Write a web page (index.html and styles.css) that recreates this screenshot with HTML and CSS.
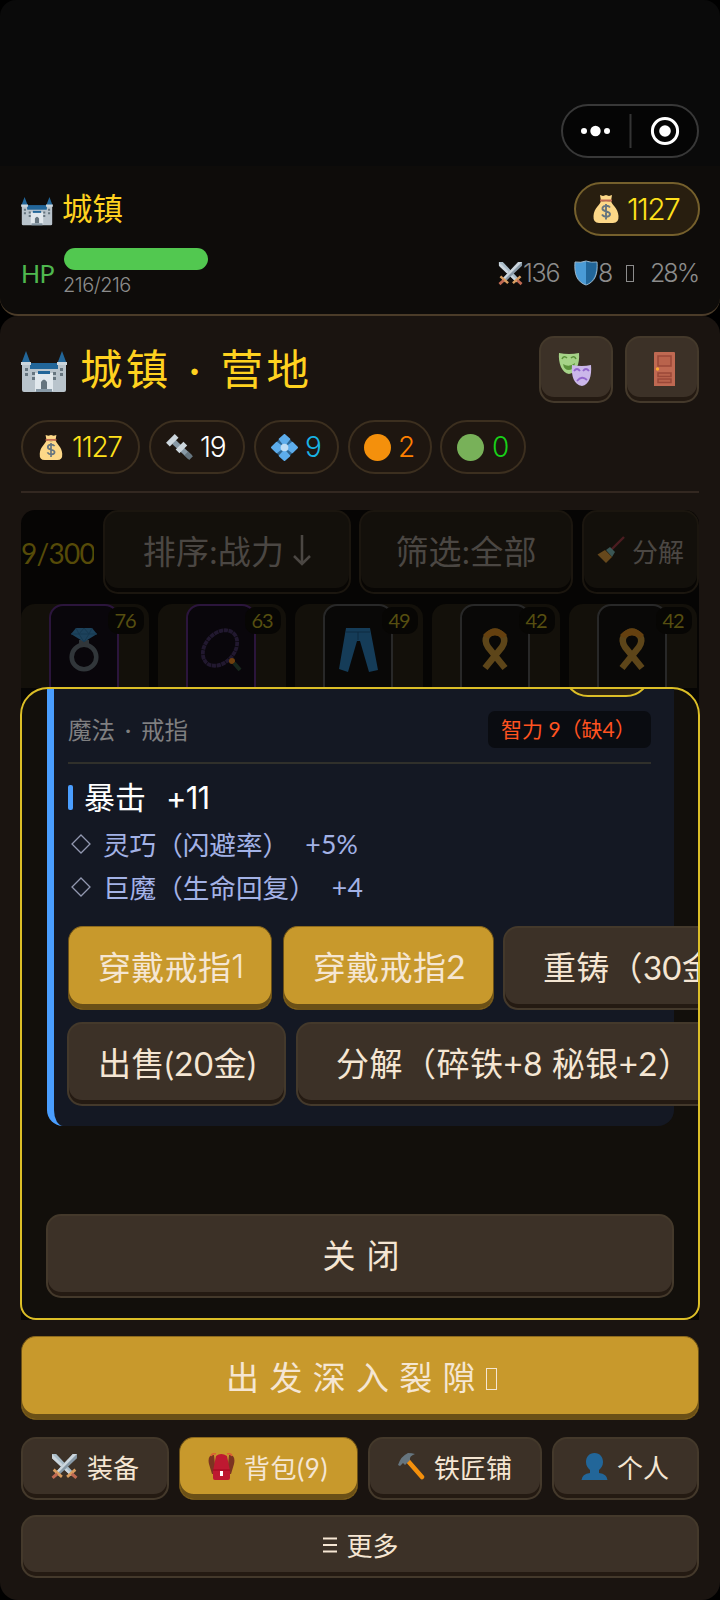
FILE: index.html
```html
<!DOCTYPE html>
<html lang="zh-CN">
<head>
<meta charset="utf-8">
<title>城镇 · 营地</title>
<link rel="stylesheet" href="styles.css">
</head>
<body>
<svg class="sprite" aria-hidden="true">
  <symbol id="castle" viewBox="0 0 46 42">
    <path d="M5 0L9.500 12H.5zM41 0l4.500 12h-9z" fill="#226699"/>
    <path d="M8 12h30v8H8z" fill="#226699"/>
    <path d="M1 13h8v5h28v-5h8v26q0 2-2 2H3q-2 0-2-2z" fill="#b9c4cc"/>
    <path d="M9 12h28v6H9z" fill="#226699"/>
    <path d="M0 11h10v3H0zM36 11h10v3H36z" fill="#ccd6dd"/>
    <path d="M14 22h4v-2h10v2h4v18H14z" fill="#e1e8ed"/>
    <path d="M17 20h12v3H17z" fill="#226699"/>
    <path d="M4 17h3v3H4zM4 22h3v3H4zM39 17h3v3h-3zM39 22h3v3h-3zM11 21h3v3h-3zM11 26h3v3h-3zM32 21h3v3h-3zM32 26h3v3h-3zM20 38v-7q3-5 6 0v7z" fill="#66757f"/>
    <path d="M15 38h16v3H15z" fill="#8899a6"/>
  </symbol>
  <symbol id="bag" viewBox="0 0 26 30">
    <path d="M8 7q5 2 10 0c1 4 7 7 7.500 15Q26 29 20 29H6Q0 29 .5 22C1 14 7 11 8 7z" fill="#fdd888"/>
    <path d="M7 1l3 1 3-1 3 1 3-1-1 6q-5 2-10 0z" fill="#fdd888"/>
    <path d="M7 5.500h12v2H7z" fill="#bf6952"/>
    <path d="M17 13.500c-2-3-8-2-7.500 1.500.5 3 7.500 2 7.500 5s-6 4-8 .5M13 10v15.500" fill="none" stroke="#67757f" stroke-width="1.900"/>
  </symbol>
  <symbol id="swords" viewBox="0 0 26 26">
    <path d="M1 1h4l17 18-3 3L1 5z" fill="#a9bcc8"/><path d="M1 1l20 20-2 1L1 5z" fill="#ccd6dd"/>
    <path d="M25 1h-4L4 19l3 3L25 5z" fill="#8899a6"/><path d="M25 1L5 21l-1-2L21 1z" fill="#ccd6dd"/>
    <path d="M2.500 16l8 7M23.500 16l-8 7" stroke="#d99e60" stroke-width="2.600"/>
    <path d="M6 20l-4.500 4M20 20l4.500 4" stroke="#bf6952" stroke-width="3"/>
  </symbol>
  <symbol id="shield" viewBox="0 0 24 26">
    <path d="M12 1q5 2 11 1c1 12-2 20-11 23C3 22 0 14 1 2q6 1 11-1z" fill="#4a9bd6" stroke="#9fb9cb"/>
    <path d="M12 1.500Q17 3.500 22.500 2.500C23 14 20 21.500 12 24.500z" fill="#226699"/>
  </symbol>
  <symbol id="masks" viewBox="0 0 34 34">
    <path d="M1 1q10 2 20 0c1 11-3 20-10 21C4 21 0 11 1 1z" fill="#a6d388"/>
    <path d="M4 7q2-4 5-1M13 6q3-3 5 1" fill="none" stroke="#5c913b" stroke-width="1.600"/><path d="M5 12q6 4 12-1-1 7-6 7-5 0-6-6z" fill="#5c913b"/>
    <path d="M14 13q10 2 19 0c1 11-2 20-9 21-8-1-11-10-10-21z" fill="#cbb7ea"/>
    <path d="M16 19q3-4 6 0M25 19q3-4 6 0M19 29q5-6 10-1" fill="none" stroke="#9266cc" stroke-width="1.800"/>
  </symbol>
  <symbol id="door" viewBox="0 0 21 34">
    <path d="M0 1q0-1 1-1h19q1 0 1 1v33H0z" fill="#bf6952"/>
    <path d="M4 4h13v10H4zM4 21h13v3.500H4zM4 27h13v3.500H4z" fill="#b9634c" stroke="#9a4838" stroke-width="1.500"/><circle cx="3.500" cy="17" r="1.700" fill="#ffac33"/>
  </symbol>
  <symbol id="bolt" viewBox="0 0 28 28">
    <path d="M8 8l17 16" stroke="#8899a6" stroke-width="5.500"/><path d="M2 11L11 2" stroke="#ccd6dd" stroke-width="5.500"/>
    <path d="M12 18l8-8" stroke="#ccd6dd" stroke-width="5.500"/><path d="M21 20l5 5" stroke="#66757f" stroke-width="5.500"/>
  </symbol>
  <symbol id="gem" viewBox="0 0 28 28">
    <path d="M7 7l14 14M21 7L7 21" stroke="#2a6797" stroke-width="2.500"/>
    <path d="M14 1l5 4.500-5 6-5-6zM14 17l5 5.500-5 4.500-5-4.500zM1 14l5-5 6 5-6 5zM27 14l-5-5-6 5 6 5z" fill="#5dadec" stroke="#5dadec" stroke-width="2" stroke-linejoin="round"/>
    <circle cx="14" cy="14" r="4" fill="#bddcf4"/>
  </symbol>
  <symbol id="brush" viewBox="0 0 28 28">
    <path d="M14 14L27 1" stroke="#4b1c21" stroke-width="2.400"/><path d="M9 14l4-3 5 5-3 5z" fill="#3a5654"/><path d="M8 14l7 7-6 6-8.500-8.500z" fill="#66481c"/>
  </symbol>
  <symbol id="ring" viewBox="0 0 30 44">
    <circle cx="15" cy="29" r="12.300" fill="none" stroke="#31363a" stroke-width="4.600"/><path d="M10 12h10v6H10z" fill="#31363a"/>
    <path d="M7 0h16l5 6-13 8L2 6z" fill="#1d425c"/><path d="M7 0l3 6 5-6 5 6 3-6M2 6h26M10 6l5 8 5-8" fill="none" stroke="#173950"/>
  </symbol>
  <symbol id="beads" viewBox="0 0 42 42">
    <ellipse cx="20" cy="19" rx="20" ry="14.500" transform="rotate(-48 20 19)" fill="none" stroke="#21182f" stroke-width="3.800" stroke-dasharray="4.300 .6"/>
    <circle cx="32" cy="32" r="3" fill="#70400e"/><path d="M34 34l6 7" stroke="#17271d" stroke-width="4"/>
  </symbol>
  <symbol id="jeans" viewBox="0 0 42 44">
    <path d="M9 0h24l8 42-9 2-9-31-3 0-9 31-9-3z" fill="#153c58"/><path d="M9 4h24M21 4v8" stroke="#0f2b40"/>
  </symbol>
  <symbol id="ribbon" viewBox="0 0 28 44">
    <path d="M4 40L21 19q4-6 1-11Q14-1 6 8q-3 5 1 11l17 21" fill="none" stroke="#5d4519" stroke-width="6.500"/>
    <path d="M2 7Q14-6 26 7l-4 3q-8-5-16 0z" fill="#65400f"/>
  </symbol>
  <symbol id="pack" viewBox="0 0 27 27">
    <path d="M6 2Q-1 2 1 11l3 10h4zM21 2q7 0 5 9l-3 10h-4z" fill="#7c3421"/><path d="M3 3q1-3 5-2M24 3q-1-3-5-2" fill="none" stroke="#dd5f35" stroke-width="1.600"/>
    <path d="M8 3q5-4 11 0l3 15v7q0 2-2 2H7q-2 0-2-2v-7z" fill="#be1931"/><path d="M5 17h17" stroke="#a0041e"/><path d="M12 18h3v5h-3z" fill="#fff"/>
  </symbol>
  <symbol id="hammer" viewBox="0 0 27 27">
    <path d="M10 8l14 16" stroke="#f4900c" stroke-width="4.500" stroke-linecap="round"/>
    <path d="M0 12q3-9 10-12 4 0 7 1-6 2-5 6l-5 5-2-2-3 3z" fill="#66757f"/>
  </symbol>
  <symbol id="person" viewBox="0 0 27 27">
    <path d="M13.500 0C19 0 22 4 22 9c0 4-2 6-4 8v3q8 1 8.500 7H.5Q1 21 9 20v-3c-2-2-4-4-4-8 0-5 3-9 8.500-9z" fill="#226699"/>
  </symbol>
</svg>

<div class="app">
  <div class="statusbar">
    <div class="capsule">
      <svg width="138" height="54" viewBox="0 0 138 54">
        <circle cx="21" cy="26" r="3" fill="#fff"/><circle cx="32.500" cy="26" r="5.200" fill="#fff"/><circle cx="44" cy="26" r="3" fill="#fff"/>
        <path d="M67.500 9v34" stroke="#343434" stroke-width="2"/>
        <circle cx="102" cy="26" r="12.600" fill="none" stroke="#fff" stroke-width="3"/><circle cx="102" cy="26" r="5.800" fill="#fff"/>
      </svg>
    </div>
  </div>

  <header class="hud">
    <div class="hud-top">
      <div class="place"><svg class="i-castle"><use href="#castle"/></svg><span>城镇</span></div>
      <div class="gold num"><svg class="i-bag"><use href="#bag"/></svg><span>1127</span></div>
    </div>
    <div class="hud-bottom">
      <span class="hp-label">HP</span>
      <div class="hp"><div class="hp-bar"></div><span class="hp-text num">216/216</span></div>
      <div class="stats num">
        <svg class="i-stat"><use href="#swords"/></svg><span class="atk">136</span>
        <svg class="i-shield"><use href="#shield"/></svg><span class="def">8</span>
        <i class="tofu"></i><span class="crit">28%</span>
      </div>
    </div>
  </header>

  <main class="camp">
    <div class="title-row">
      <svg class="i-title"><use href="#castle"/></svg>
      <h1>城镇<span class="dot">·</span>营地</h1>
      <div class="btn square"><svg class="i-masks"><use href="#masks"/></svg></div>
      <div class="btn square"><svg class="i-door"><use href="#door"/></svg></div>
    </div>
    <div class="chips num">
      <div class="chip c1"><svg class="i-bag"><use href="#bag"/></svg><span>1127</span></div>
      <div class="chip c2"><svg><use href="#bolt"/></svg><span>19</span></div>
      <div class="chip c3"><svg><use href="#gem"/></svg><span>9</span></div>
      <div class="chip c4"><i class="ball"></i><span>2</span></div>
      <div class="chip c5"><i class="ball"></i><span>0</span></div>
    </div>

    <section class="bag">
      <div class="toolbar">
        <div class="count">9/300</div>
        <div class="btn dim sort">排序:战力<svg width="18" height="32" viewBox="0 0 18 32"><path d="M9 1v29M1 22l8 8 8-8" fill="none" stroke="#4b4743" stroke-width="2.500"/></svg></div>
        <div class="btn dim filter">筛选:全部</div>
        <div class="btn dim split"><svg><use href="#brush"/></svg>分解</div>
      </div>
      <div class="cells">
        <div class="cell"><div class="tile epic"><svg><use href="#ring"/></svg></div><b>76</b></div>
        <div class="cell"><div class="tile epic"><svg><use href="#beads"/></svg></div><b>63</b></div>
        <div class="cell"><div class="tile"><svg><use href="#jeans"/></svg></div><b>49</b></div>
        <div class="cell"><div class="tile"><svg><use href="#ribbon"/></svg></div><b>42</b></div>
        <div class="cell"><div class="tile"><svg><use href="#ribbon"/></svg></div><b>42</b></div>
      </div>

      <div class="modal">
        <div class="card">
          <div class="tag"></div>
          <div class="kind"><span>魔法</span><span class="sep">·</span><span>戒指</span><div class="need">智力 9（缺4）</div></div>
          <div class="main-stat"><i></i><span>暴击</span><span class="val num">+11</span></div>
          <div class="affix"><svg viewBox="0 0 20 20"><path d="M10 1l9 9-9 9-9-9z"/></svg><span>灵巧（闪避率）</span><span class="val">+5%</span></div>
          <div class="affix"><svg viewBox="0 0 20 20"><path d="M10 1l9 9-9 9-9-9z"/></svg><span>巨魔（生命回复）</span><span class="val">+4</span></div>
          <div class="actions">
            <div class="btn gold-btn wear1">穿戴戒指<span class="num">1</span></div>
            <div class="btn gold-btn wear2">穿戴戒指<span>2</span></div>
            <div class="btn reforge">重铸（30金）</div>
          </div>
          <div class="actions second">
            <div class="btn sell">出售(20金)</div>
            <div class="btn scrap">分解（碎铁+8 秘银+2）</div>
          </div>
        </div>
        <div class="btn close">关闭</div>
      </div>
    </section>

    <div class="btn gold-btn depart">出发深入裂隙<i class="tofu"></i></div>
    <nav class="tabs">
      <div class="btn t1"><svg><use href="#swords"/></svg><span>装备</span></div>
      <div class="btn gold-btn t2"><svg><use href="#pack"/></svg><span>背包(9)</span></div>
      <div class="btn t3"><svg><use href="#hammer"/></svg><span>铁匠铺</span></div>
      <div class="btn t4"><svg><use href="#person"/></svg><span>个人</span></div>
    </nav>
    <div class="btn more"><svg width="14" height="16" viewBox="0 0 14 16"><path d="M0 1.500h14M0 8h14M0 14.500h14" stroke="#f5e6d3" stroke-width="2"/></svg><span>更多</span></div>
  </main>
</div>
</body>
</html>
```
FILE: styles.css
```css
* { box-sizing: border-box; }
body { margin: 0; background: #000; font-family: Lato, "Noto Sans CJK SC", sans-serif; font-weight: 400; }
svg { display: block; flex: none; }
span, h1, .btn, .need { white-space: nowrap; }
.num { font-family: Inter, Lato, sans-serif; font-weight: 300; }
.sprite { position: absolute; width: 0; height: 0; }
.app { width: 720px; height: 1600px; overflow: hidden; }

.statusbar { height: 166px; padding: 104px 21px 0 0; background: #0a0a0a; border-radius: 16px 16px 0 0; display: flex; justify-content: flex-end; }
.capsule { width: 138px; height: 54px; border: 2px solid #383838; border-radius: 27px; background: #050505; }
.capsule svg { margin: -1px 0 0; }

.hud { height: 150px; padding: 16px 20px 0 21px; background: #0e0c0a; border-bottom: 2px solid #4b3c29; border-radius: 0 0 18px 18px; }
.hud-top { display: flex; justify-content: space-between; height: 54px; align-items: center; }
.place { display: flex; align-items: center; gap: 9px; color: #ffd21f; font-size: 30.500px; line-height: 40px; }
.place span { margin-top: -3px; }
.i-castle { width: 32px; height: 29px; margin-top: 4px; }
.gold { width: 126px; height: 54px; border: 2px solid #75602c; border-radius: 27px; background: #281e0f; display: flex; align-items: center; padding-left: 17px; gap: 8px; color: #ffe01b; font-size: 30px; line-height: 30px; letter-spacing: -1.700px; }
.gold .i-bag { width: 26px; height: 30px; }
.hud-bottom { display: flex; height: 58px; padding-top: 12px; }
.hp-label { width: 43px; color: #4fb84f; font-size: 25px; line-height: 50px; letter-spacing: -.5px; }
.hp-bar { width: 144px; height: 22px; border-radius: 11px; background: #52c850; }
.hp-text { display: block; font-size: 20px; line-height: 30px; color: #8c8c8c; letter-spacing: -.5px; margin-left: -1px; }
.stats { margin-left: auto; display: flex; align-items: center; height: 50px; color: #8c8c8c; font-size: 25px; letter-spacing: -1.300px; }
.i-stat { width: 25px; height: 25px; }
.i-shield { width: 24px; height: 26px; }
.atk { width: 51px; }
.def { width: 28px; }
.tofu { display: block; width: 8px; height: 17px; border: 1px solid currentColor; flex: none; }
.crit { margin-left: 16px; width: 50px; letter-spacing: -2px; }

.camp { height: 1284px; padding: 20px 21px 0; background: #1a1410; border-radius: 18px; }
.title-row { display: flex; height: 68px; gap: 12px; }
.i-title { width: 46px; height: 42px; margin: 15px 0 0; }
h1 { margin: 0 auto 0 1px; font-size: 42.500px; font-weight: 400; line-height: 66px; letter-spacing: 3.300px; color: #ffd21f; }
h1 .dot { display: inline-block; width: 49px; text-align: center; }

.btn { display: flex; align-items: center; border: 2px solid #44392b; border-radius: 15px; background: #3c3127; box-shadow: inset 0 -4px 0 #241a12; color: #f5e6d3; font-size: 33px; height: 84px; flex: none; padding-bottom: 4px; }
.square { width: 74px; height: 67px; justify-content: center; }
.i-masks { width: 34px; height: 34px; margin: 2px 0 0 -3px; }
.i-door { width: 21px; height: 34px; margin: 2px 0 0 5px; }
.gold-btn { background: #c8992c; border-color: #6b5017; border-top-color: #8d6a1d; border-width: 1px; box-shadow: inset 0 -5px 0 #6b5017; }

.chips { display: flex; height: 89px; margin-bottom: 17px; padding-top: 16px; border-bottom: 2px solid #332821; }
.chip { height: 54px; border: 2px solid #3c2f1f; border-radius: 27px; background: #1e1610; display: flex; align-items: center; padding-left: 16px; gap: 10px; font-size: 28px; line-height: 28px; letter-spacing: -1.300px; margin-right: 9px; }
.chip svg { width: 27px; height: 27px; margin-left: -1px; }
.chip .i-bag { width: 24px; height: 27px; margin-left: 0; }
.ball { width: 27px; height: 27px; border-radius: 50%; }
.c1 { width: 119px; color: #ffe01b; gap: 9px; }
.c2 { width: 96px; color: #fff; gap: 7px; }
.c3 { width: 85px; color: #18b4e6; gap: 7px; }
.c4 { width: 84px; color: #ff8000; padding-left: 14px; margin-right: 8px; gap: 7px; }
.c4 .ball { background: #f4900c; }
.c5 { width: 86px; color: #18d018; padding-left: 15px; gap: 8px; }
.c5 .ball { background: #78b159; }

.bag { position: relative; height: 810px; background: #060504; border-radius: 14px 14px 0 0; }
.toolbar { display: flex; height: 94px; }
.count { width: 73px; margin-right: 9px; overflow: hidden; font-size: 28px; line-height: 86px; color: #564b08; letter-spacing: -.7px; }
.dim { background: #13100b; border-color: #1b160f; box-shadow: inset 0 -4px 0 #080604; color: #4b4743; justify-content: center; }
.sort { width: 248px; margin-right: 8px; gap: 9px; letter-spacing: .3px; }
.filter { width: 214px; margin-right: 9px; letter-spacing: .2px; }
.split { width: 117px; font-size: 26px; gap: 7px; }
.split svg { width: 28px; height: 28px; }
.cells { display: flex; gap: 9px; height: 84px; overflow: hidden; }
.cell { position: relative; width: 128px; height: 120px; flex: none; background: #13100a; border-radius: 14px; padding-left: 28px; }
.tile { width: 70px; height: 120px; border: 2px solid #282828; border-radius: 14px; background: #090807; padding-top: 22px; }
.tile.epic { border-color: #2b153c; background: #09060b; }
.tile svg { width: 42px; height: 44px; margin: 0 auto; }
.cell b { position: absolute; right: 5px; top: 3px; width: 36px; height: 27px; border-radius: 10px; background: #070604; color: #564e10; font-weight: 400; font-size: 20px; line-height: 27px; text-align: center; letter-spacing: -1px; padding-right: 2px; }

.modal { position: absolute; left: -1px; top: 177px; width: 680px; height: 633px; border: 2px solid #dcbe27; border-radius: 28px 28px 16px 16px; background: #120f0b; overflow: hidden; padding-left: 25px; }
.card { position: relative; width: 627px; height: 437px; padding: 1px 23px 0 14px; border-left: 7px solid #4a9eff; border-radius: 0 0 16px 16px; background: #141823; }
.tag { position: absolute; left: 509px; top: -42px; width: 88px; height: 50px; border: 2px solid #dcbe27; border-radius: 25px; background: #2e2312; }
.kind { display: flex; align-items: center; height: 74px; padding-top: 6px; border-bottom: 2px solid #30302b; font-size: 23.500px; color: #7f7f80; }
.sep { width: 26px; text-align: center; }
.need { margin-left: auto; width: 163px; height: 37px; padding-left: 13px; border-radius: 7px; background: #0a0c11; color: #ff5320; font-size: 21px; line-height: 35px; }
.main-stat { display: flex; align-items: center; height: 58px; color: #fff; font-size: 31px; padding-top: 8px; }
.main-stat i { width: 5px; height: 25px; border-radius: 2px; background: #4a9eff; margin-right: 11px; }
.main-stat span { margin-top: -3px; }
.main-stat .val { margin: 0 0 0 20px; letter-spacing: -.8px; font-weight: 400; }
.affix { display: flex; align-items: center; height: 43px; padding-left: 3px; color: #a3b2e6; font-size: 26.600px; }
.affix svg { width: 20px; height: 20px; margin-right: 12px; fill: none; stroke: #9298b0; stroke-width: 1.300; }
.affix .val { margin-left: 16px; letter-spacing: .3px; }
.actions { display: flex; padding-top: 18px; }
.actions .btn { padding-left: 29px; letter-spacing: .3px; }
.wear1 { width: 204px; margin-right: 11px; }
.wear2 { width: 211px; margin-right: 9px; }
.actions .reforge { width: 280px; padding-left: 38px; }
.actions.second { margin-left: -1px; padding-top: 12px; }
.actions .sell { width: 219px; margin-right: 10px; letter-spacing: .5px; }
.actions .scrap { width: 480px; padding-left: 38px; letter-spacing: .5px; }
.close { width: 628px; margin: 88px 0 0 -1px; justify-content: center; letter-spacing: 11px; padding-left: 13px; }

.depart { margin-top: 16px; justify-content: center; letter-spacing: 10.300px; padding-left: 3px; }
.depart .tofu { width: 11px; height: 22px; margin: 5px 0 0; }
.tabs { display: flex; gap: 10px; margin-top: 17px; }
.tabs .btn { height: 63px; font-size: 26px; gap: 9px; padding-left: 28px; }
.tabs svg { width: 27px; height: 27px; }
.t1 { width: 148px; }
.t2 { width: 179px; }
.t2 span { letter-spacing: .6px; }
.t3 { width: 174px; }
.t4 { width: 147px; }
.tabs .t4 { padding-left: 27px; }
.more { height: 63px; margin-top: 15px; justify-content: center; font-size: 26px; gap: 9px; padding-left: 2px; }
```
